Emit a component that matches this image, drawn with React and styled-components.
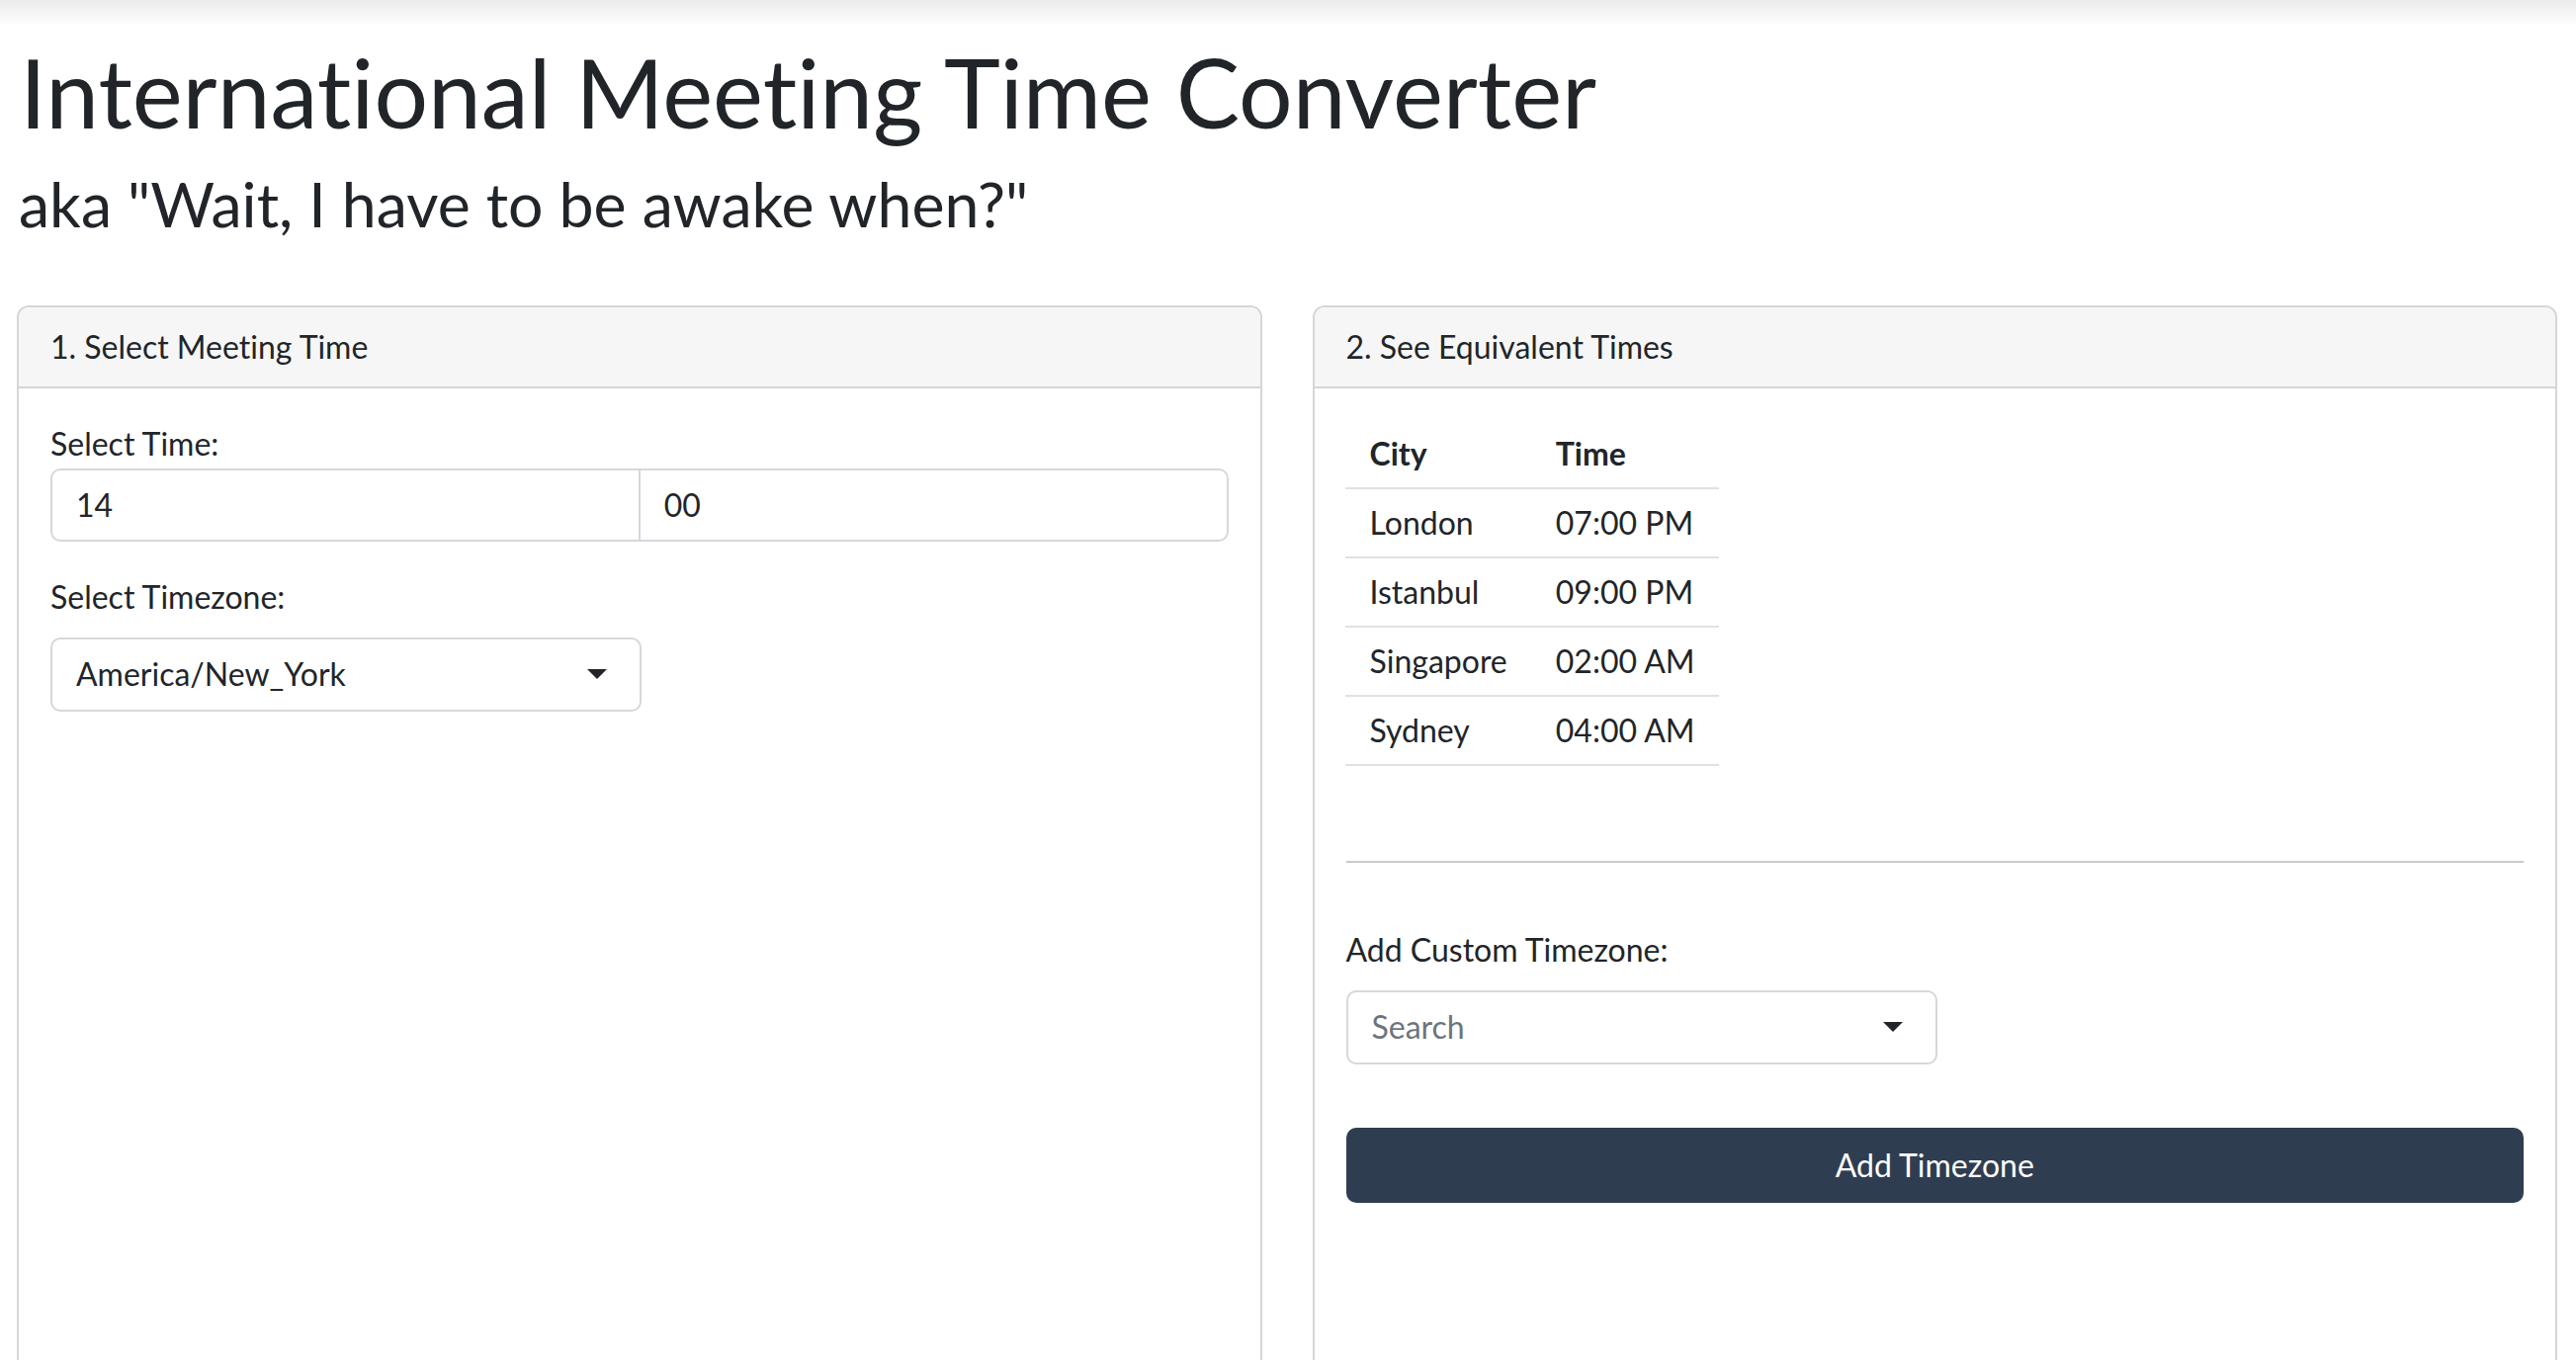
import styled, { createGlobalStyle } from "styled-components";

const GlobalStyle = createGlobalStyle`
  html, body {
    margin: 0;
    padding: 0;
    overflow: hidden;
    background: #ffffff;
  }
  body {
    font-family: "Lato", "Open Sans", sans-serif;
    font-variant-ligatures: none;
    font-feature-settings: "liga" 0, "clig" 0, "dlig" 0;
    color: #212529;
  }
  * {
    box-sizing: border-box;
  }
`;

const cities = [
  { city: "London", time: "07:00 PM" },
  { city: "Istanbul", time: "09:00 PM" },
  { city: "Singapore", time: "02:00 AM" },
  { city: "Sydney", time: "04:00 AM" },
];

export default function App() {
  return (
    <>
      <GlobalStyle />
      <TopShade />
      <Page>
        <Title>International Meeting Time Converter</Title>
        <Subtitle>aka "Wait, I have to be awake when?"</Subtitle>

        <Columns>
          <Card>
            <CardHeader>1. Select Meeting Time</CardHeader>
            <CardBody>
              <FormGroup>
                <Label>Select Time:</Label>
                <InputGroup>
                  <TimeInput defaultValue="14" $first />
                  <TimeInput defaultValue="00" />
                </InputGroup>
              </FormGroup>
              <FormGroup>
                <Label $spaced>Select Timezone:</Label>
                <SelectBox>
                  <SelectText>America/New_York</SelectText>
                  <Caret />
                </SelectBox>
              </FormGroup>
            </CardBody>
          </Card>

          <Card>
            <CardHeader>2. See Equivalent Times</CardHeader>
            <CardBody>
              <Table>
                <thead>
                  <tr>
                    <HeadCell>City</HeadCell>
                    <HeadCell>Time</HeadCell>
                  </tr>
                </thead>
                <tbody>
                  {cities.map((row) => (
                    <tr key={row.city}>
                      <Cell>{row.city}</Cell>
                      <Cell>{row.time}</Cell>
                    </tr>
                  ))}
                </tbody>
              </Table>

              <Divider />

              <FormGroup>
                <Label $spaced>Add Custom Timezone:</Label>
                <SelectBox>
                  <SelectText $placeholder>Search</SelectText>
                  <Caret />
                </SelectBox>
              </FormGroup>

              <PrimaryButton>Add Timezone</PrimaryButton>
            </CardBody>
          </Card>
        </Columns>
      </Page>
    </>
  );
}

const TopShade = styled.div`
  height: 26px;
  background: linear-gradient(#ebebeb, #ffffff);
`;

const Page = styled.div`
  padding: 10px 19px 0 17px;
`;

const Title = styled.h1`
  margin: 0 0 0 3px;
  font-size: 96.4px;
  font-weight: 400;
  line-height: 1.2;
`;

const Subtitle = styled.h2`
  margin: 16px 0 0 2px;
  font-size: 62.6px;
  font-weight: 400;
  line-height: 1.2;
`;

const Columns = styled.div`
  display: grid;
  grid-template-columns: 1fr 1fr;
  gap: 51px;
  margin-top: 66px;
`;

const Card = styled.div`
  min-height: 1120px;
  border: 2px solid #d6d6d6;
  border-radius: 12px;
  background: #ffffff;
  overflow: hidden;
`;

const CardHeader = styled.div`
  padding: 16px 32px;
  font-size: 32px;
  line-height: 48px;
  background: #f6f6f6;
  border-bottom: 2px solid #d6d6d6;
`;

const CardBody = styled.div`
  padding: 32px;
  display: flex;
  flex-direction: column;
`;

const FormGroup = styled.div`
  display: flex;
  flex-direction: column;
  margin-bottom: 32px;
`;

const Label = styled.label`
  font-size: 32px;
  line-height: 48px;
  margin-bottom: ${(p) => (p.$spaced ? "17px" : "1px")};
`;

const InputGroup = styled.div`
  display: flex;
  width: 100%;
`;

const TimeInput = styled.input`
  flex: 1;
  min-width: 0;
  height: 74px;
  padding: 0 24px;
  font-family: inherit;
  font-size: 32px;
  color: #212529;
  border: 2px solid #d4d8dc;
  background: #ffffff;
  outline: none;
  border-radius: ${(p) => (p.$first ? "10px 0 0 10px" : "0 10px 10px 0")};
  margin-left: ${(p) => (p.$first ? "0" : "-2px")};
`;

const SelectBox = styled.div`
  width: 598px;
  height: 75px;
  display: flex;
  align-items: center;
  justify-content: space-between;
  padding: 0 33px 0 24px;
  border: 2px solid #d4d8dc;
  border-radius: 10px;
  background: #ffffff;
`;

const SelectText = styled.span`
  font-size: 32px;
  line-height: 48px;
  color: ${(p) => (p.$placeholder ? "#6c757d" : "#212529")};
`;

const Caret = styled.span`
  width: 0;
  height: 0;
  border-style: solid;
  border-width: 10px 10px 0 10px;
  border-color: #212529 transparent transparent transparent;
`;

const Table = styled.table`
  border-collapse: collapse;
  align-self: flex-start;
  margin-left: -1px;
  font-size: 32px;
  line-height: 48px;
`;

const HeadCell = styled.th`
  text-align: left;
  font-weight: 700;
  padding: 10px 24px 10px 25px;
  border-bottom: 2px solid #dee2e6;
`;

const Cell = styled.td`
  padding: 10px 24px 10px 25px;
  border-bottom: 2px solid #dee2e6;
  white-space: nowrap;
`;

const Divider = styled.hr`
  width: 100%;
  margin: 96px 0 64px;
  border: 0;
  border-top: 2px solid #cbcbcb;
`;

const PrimaryButton = styled.button`
  width: 100%;
  height: 76px;
  margin-top: 32px;
  border: 0;
  border-radius: 10px;
  background: #2f3d50;
  color: #ffffff;
  font-family: inherit;
  font-size: 32px;
  cursor: pointer;
`;
